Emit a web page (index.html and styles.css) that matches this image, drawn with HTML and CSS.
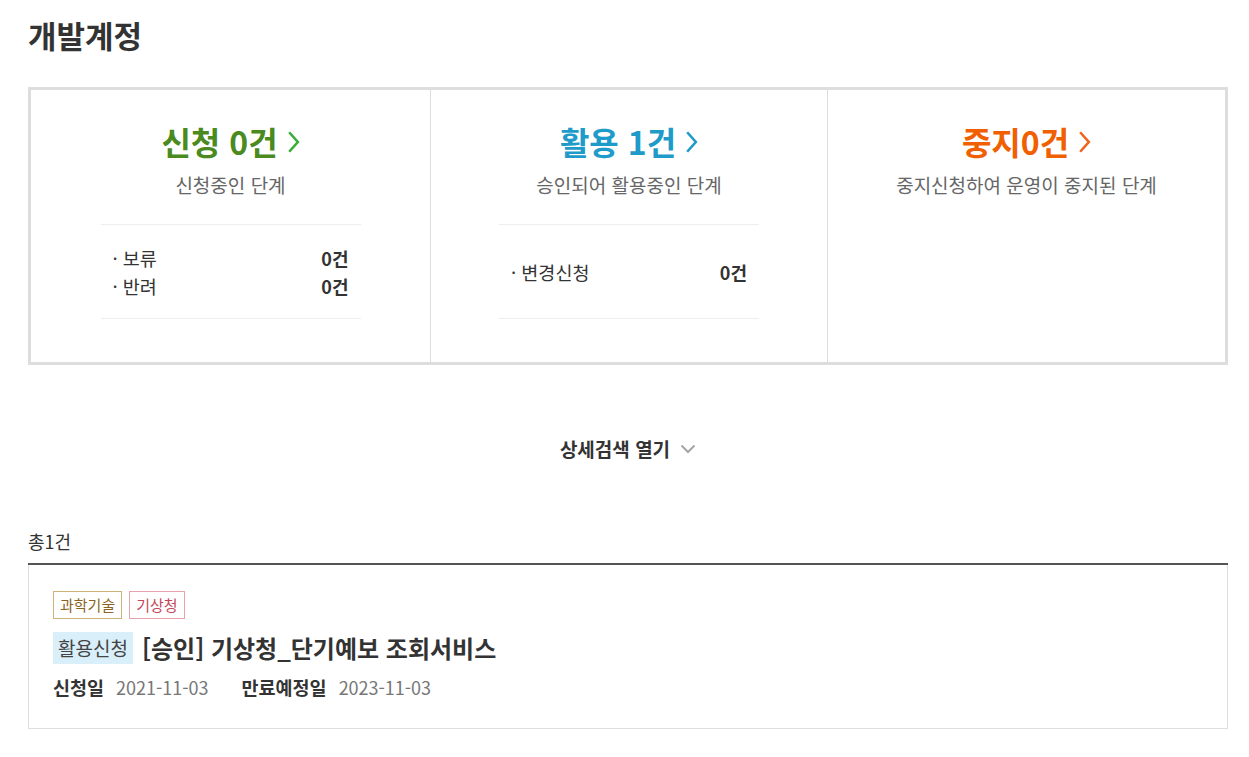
FILE: index.html
```html
<!DOCTYPE html>
<html lang="ko">
<head>
<meta charset="utf-8">
<link rel="stylesheet" href="styles.css">
</head>
<body>
<div class="page">
  <h1 class="page-title">개발계정</h1>

  <div class="summary">
    <div class="col">
      <a class="col-title green">신청 0건<svg class="chev" viewBox="0 0 12 22" width="13" height="24"><path d="M2 2 L10 11 L2 20" fill="none" stroke="#3aae3a" stroke-width="2.4"/></svg></a>
      <p class="col-desc">신청중인 단계</p>
      <ul class="col-list">
        <li><span>· 보류</span><b>0건</b></li>
        <li><span>· 반려</span><b>0건</b></li>
      </ul>
    </div>
    <div class="col">
      <a class="col-title blue">활용 1건<svg class="chev" viewBox="0 0 12 22" width="13" height="24"><path d="M2 2 L10 11 L2 20" fill="none" stroke="#1e9bc8" stroke-width="2.4"/></svg></a>
      <p class="col-desc">승인되어 활용중인 단계</p>
      <ul class="col-list">
        <li><span>· 변경신청</span><b>0건</b></li>
      </ul>
    </div>
    <div class="col">
      <a class="col-title orange">중지0건<svg class="chev" viewBox="0 0 12 22" width="13" height="24"><path d="M2 2 L10 11 L2 20" fill="none" stroke="#f0641e" stroke-width="2.4"/></svg></a>
      <p class="col-desc">중지신청하여 운영이 중지된 단계</p>
    </div>
  </div>

  <div class="search-toggle">상세검색 열기<svg viewBox="0 0 16 10" width="16" height="10"><path d="M1.5 1.5 L8 8 L14.5 1.5" fill="none" stroke="#a6a6a6" stroke-width="2"/></svg></div>

  <div class="total">총1건</div>

  <div class="list">
    <div class="card">
      <div class="tags">
        <span class="tag tag-cat">과학기술</span>
        <span class="tag tag-org">기상청</span>
      </div>
      <div class="card-title">
        <span class="badge">활용신청</span>
        <span class="name">[승인] 기상청_단기예보 조회서비스</span>
      </div>
      <div class="dates">
        <span class="label">신청일</span><span class="val">2021-11-03</span>
        <span class="label gap">만료예정일</span><span class="val">2023-11-03</span>
      </div>
    </div>
  </div>
</div>
</body>
</html>
```

FILE: styles.css
```css
* { box-sizing: border-box; }
html, body { margin: 0; padding: 0; background: #fff; }
body {
  font-family: "Noto Sans CJK KR", "Noto Sans", sans-serif;
  color: #333;
}
.page { padding: 14px 21px 0 28px; }
.page-title {
  margin: 0;
  font-size: 31px;
  font-weight: 700;
  line-height: 42px;
  color: #333;
}
.summary {
  margin-top: 31px;
  border: 3px solid #ddd;
  display: grid;
  grid-template-columns: 399px 397px 1fr;
  height: 278px;
}
.col {
  display: flex;
  flex-direction: column;
  align-items: center;
  padding-top: 31px;
}
.col + .col { border-left: 1px solid #ddd; }
.col-title {
  display: flex;
  align-items: center;
  gap: 9px;
  font-size: 32px;
  font-weight: 700;
  line-height: 40px;
}
.col-title .chev { margin-top: 1px; }
.green { color: #4a8a1e; }
.blue { color: #1e9bc8; }
.orange { color: #f06000; }
.col-desc {
  margin: 11px 0 0;
  font-size: 19px;
  line-height: 26px;
  color: #666;
}
.col-list {
  list-style: none;
  margin: 26px 0 0;
  padding: 0 12px;
  width: 260px;
  border-top: 1px solid #eee;
  border-bottom: 1px solid #eee;
  height: 95px;
  display: flex;
  flex-direction: column;
  justify-content: center;
}
.col-list li {
  display: flex;
  justify-content: space-between;
  font-size: 18.5px;
  line-height: 28px;
  color: #333;
}
.col-list li b { font-weight: 700; color: #333; font-size: 18px; }
.search-toggle {
  margin-top: 70px;
  display: flex;
  justify-content: center;
  align-items: center;
  gap: 10px;
  font-size: 19px;
  font-weight: 700;
  line-height: 28px;
  color: #333;
}
.total {
  margin-top: 65px;
  font-size: 18px;
  line-height: 26px;
  color: #333;
}
.list {
  margin-top: 9px;
  border-top: 2px solid #555;
}
.card {
  border: 1px solid #ddd;
  border-top: 0;
  padding: 26px 24px 26px 24px;
  height: 164px;
}
.tags { display: flex; gap: 7px; }
.tag {
  display: inline-block;
  height: 28px;
  line-height: 26px;
  padding: 0 6px;
  font-size: 15px;
  border: 1px solid;
}
.tag-cat { border-color: #cfb27a; color: #8a6424; }
.tag-org { border-color: #e8a2ac; color: #c4465a; }
.card-title {
  margin-top: 13px;
  display: flex;
  align-items: center;
  gap: 9px;
}
.badge {
  display: inline-block;
  background: #d9eff9;
  color: #444;
  font-size: 19px;
  line-height: 32px;
  height: 32px;
  padding: 0 5px;
}
.name {
  font-size: 24px;
  font-weight: 700;
  color: #333;
  line-height: 32px;
}
.dates {
  margin-top: 10px;
  display: flex;
  align-items: baseline;
  font-size: 18.5px;
  line-height: 26px;
}
.dates .label { font-weight: 700; color: #333; margin-right: 12px; }
.dates .label.gap { margin-left: 33px; }
.dates .val { color: #777; font-size: 18px; }
```
